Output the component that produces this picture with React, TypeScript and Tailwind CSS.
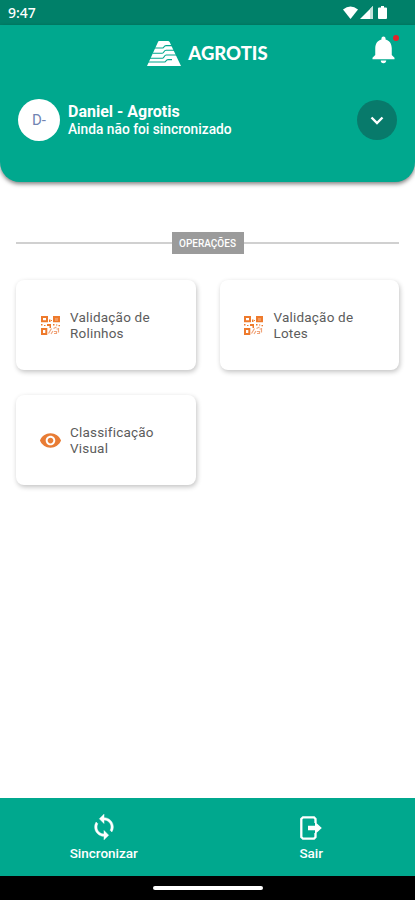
import React from 'react';
import { MdNotifications, MdVisibility } from 'react-icons/md';

interface OperationCardProps {
  title: string;
  icon: React.ReactNode;
}

function AgrotisLogo() {
  return (
    <svg className="h-[25px] w-[34px]" viewBox="0 0 34 25" fill="none">
      <path d="M12 0h9q1 0 1.6 1L34 25H0L11 1q.4-1 1-1z" fill="#fff" />
      <g stroke="#00a88e" strokeWidth="1.1">
        <path d="M8 7h7.5q1 0 1.6-1.2T19 4.6h6" />
        <path d="M5.5 12.2h9.7q1 0 1.8-1.5t2-1.5h8.5" />
        <path d="M3 17.2h12.5q1 0 1.8-1.6t2-1.6H30" />
        <path d="M1 21h16.5q1 0 1.6-1.2t1.9-1.2h4" />
      </g>
    </svg>
  );
}

function QrIcon() {
  return (
    <svg className="h-[19px] w-[19px]" viewBox="0 0 19 19" fill="none">
      <g stroke="#ee7a2c" strokeWidth="2">
        <path d="M1 1h5v4.3H1zM13 1h5v4.3h-5zM1 13h4.3v5H1z" />
      </g>
      <path
        d="M14 2.3h3v1.4h-3zM8 3.5h1.5V6H8zM10 4h1v1h-1zM0 8h1.5v1.5H0zM3 9h1.5v1H3zM6 8h4v4H8.5v-2H6zM12 8h1.5v1.5H12zM15 8.5h1.3v1H15zM17.5 9H19v1.2h-1.5z"
        fill="#ee7a2c"
      />
      <path
        d="M7.5 17.5l3-5M10 18l2-3M12.5 12.5l3-1.5M13 15.5h2.5v2H13M17.5 12v4.5M15.5 13h2"
        stroke="#f0a47a"
        strokeWidth="1.2"
      />
    </svg>
  );
}

function SyncIcon() {
  return (
    <svg className="h-7 w-7" viewBox="0 0 24 24" fill="#fff" stroke="#fff" strokeWidth="0.4">
      <path d="M12 4V1L8 5l4 4V6c3.31 0 6 2.69 6 6 0 1.01-.25 1.97-.7 2.8l1.46 1.46C19.54 15.03 20 13.57 20 12c0-4.42-3.58-8-8-8zm0 14c-3.31 0-6-2.69-6-6 0-1.01.25-1.97.7-2.8L5.24 7.74C4.46 8.97 4 10.43 4 12c0 4.42 3.58 8 8 8v3l4-4-4-4v3z" />
    </svg>
  );
}

function ExitIcon() {
  return (
    <svg className="h-6 w-[22px]" viewBox="0 0 22 24" fill="none">
      <path
        d="M15.5 7V3L14 1.3H3L1.3 3v18L3 22.7h11l1.5-1.7v-4"
        stroke="#fff"
        strokeWidth="2.3"
      />
      <path d="M8 9.8h7V5.8l6.8 6.2-6.8 6.2v-4H8z" fill="#fff" />
    </svg>
  );
}

function StatusBar() {
  return (
    <div className="flex h-[25px] items-center justify-between bg-[#008069] pl-[8px] pr-[27px]">
      <span className="font-['Noto_Sans',sans-serif] text-[14px] font-medium leading-none text-white">9:47</span>
      <svg className="h-[14px] w-[45px]" viewBox="0 0 45 14" fill="#fff">
        <path d="M0 3.5Q7.5-2.5 15 3.5L7.5 13z" />
        <path d="M30 0v13H17z" />
        <path d="M30 0v13h-3V3z" fill="#c4e2dc" />
        <path d="M38 0h3v1.5h2q1 0 1 1V12q0 1-1 1h-7q-1 0-1-1V2.5q0-1 1-1h2z" />
      </svg>
    </div>
  );
}

function OperationCard({ title, icon }: OperationCardProps) {
  return (
    <div className="flex h-[90px] items-center rounded-lg bg-white pl-[22px] shadow-[1px_2px_5px_rgba(0,0,0,0.24)]">
      <div className="flex w-6 shrink-0 items-center justify-center">{icon}</div>
      <p className="ml-2 w-[100px] text-[13.5px] leading-4 tracking-[0.2px] text-[#5c5c5c]">{title}</p>
    </div>
  );
}

export default function App() {
  return (
    <div className="flex h-[900px] w-[415px] flex-col overflow-hidden bg-white font-['Roboto',sans-serif]">
      <StatusBar />

      <header className="h-[157px] shrink-0 rounded-b-[20px] bg-[#00a88e] shadow-[0_2px_4px_rgba(0,0,0,0.5)]">
        <div className="relative flex h-[57px] items-center justify-center">
          <div className="flex items-center gap-[7px]">
            <AgrotisLogo />
            <span className="font-['Lato',sans-serif] text-[18.5px] font-black leading-none text-white">AGROTIS</span>
          </div>
          <div className="absolute right-[15px] top-[8px]">
            <MdNotifications className="h-[33px] w-[33px] text-white" />
            <span className="absolute right-[1px] top-[2px] h-[6px] w-[6px] rounded-full bg-[#e3242b]" />
          </div>
        </div>
        <div className="flex items-center px-[18px] pt-[17px]">
          <div className="flex h-[42px] w-[42px] items-center justify-center rounded-full bg-white text-[15px] text-[#7184b2]">
            D-
          </div>
          <div className="ml-2 flex-1 pt-px text-white">
            <p className="text-[16px] font-bold leading-[18px]">Daniel - Agrotis</p>
            <p className="text-[13.75px] font-medium leading-[17px]">Ainda não foi sincronizado</p>
          </div>
          <button className="flex h-10 w-10 items-center justify-center rounded-full bg-[#087a6b]">
            <svg className="h-[9px] w-[14px]" viewBox="0 0 14 9" fill="none">
              <path d="M1.5 1.5L7 7l5.5-5.5" stroke="#fff" strokeWidth="2.4" />
            </svg>
          </button>
        </div>
      </header>

      <main className="flex-1 px-4 pt-[50px]">
        <div className="flex items-center">
          <div className="h-[2px] flex-1 bg-[#d0d0d0]" />
          <span className="flex h-[22px] w-[72px] items-center justify-center bg-[#9b9b9b] text-[10px] font-medium text-white">
            OPERAÇÕES
          </span>
          <div className="h-[2px] flex-1 bg-[#d0d0d0]" />
        </div>
        <div className="mt-[26px] grid grid-cols-2 gap-x-6 gap-y-[25px]">
          <OperationCard title="Validação de Rolinhos" icon={<QrIcon />} />
          <OperationCard title="Validação de Lotes" icon={<QrIcon />} />
          <OperationCard title="Classificação Visual" icon={<MdVisibility className="h-[23px] w-[23px] text-[#e87c35]" />} />
        </div>
      </main>

      <nav className="grid h-[78px] shrink-0 grid-cols-2 bg-[#00a88e] text-[13.5px] font-medium leading-4 text-white">
        <button className="flex flex-col items-center pt-[15px]">
          <SyncIcon />
          <span className="mt-[4px]">Sincronizar</span>
        </button>
        <button className="flex flex-col items-center pt-[18px]">
          <ExitIcon />
          <span className="mt-[5px]">Sair</span>
        </button>
      </nav>

      <div className="flex h-6 shrink-0 items-center justify-center bg-black">
        <div className="h-1 w-[110px] rounded-full bg-white" />
      </div>
    </div>
  );
}
